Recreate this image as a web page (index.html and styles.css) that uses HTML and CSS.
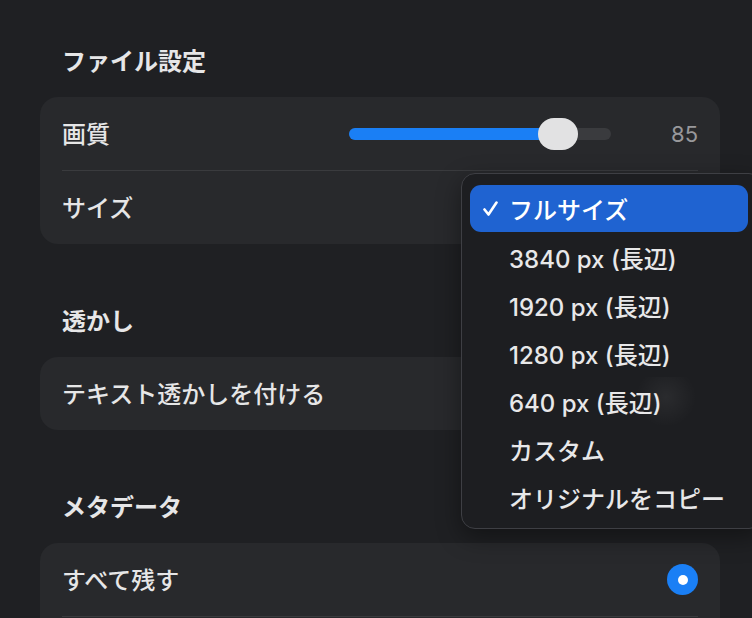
FILE: index.html
```html
<!DOCTYPE html>
<html lang="ja">
<head>
    <meta charset="UTF-8">
    <meta name="viewport" content="width=device-width, initial-scale=1.0">
    <title>書き出し設定</title>
    <link rel="stylesheet" href="styles.css">
</head>
<body>

<div class="page">

    <div class="section">
        <div class="section-title">ファイル設定</div>
        <div class="card">
            <div class="row">
                <span class="label">画質</span>
                <div class="slider">
                    <div class="slider-fill" style="width: 209px"></div>
                    <div class="slider-thumb" style="left: 189px"></div>
                </div>
                <span class="value">85</span>
            </div>
            <div class="row">
                <span class="label">サイズ</span>
            </div>
        </div>
    </div>

    <div class="section">
        <div class="section-title">透かし</div>
        <div class="card">
            <div class="row">
                <span class="label">テキスト透かしを付ける</span>
            </div>
        </div>
    </div>

    <div class="section">
        <div class="section-title">メタデータ</div>
        <div class="card">
            <div class="row">
                <span class="label">すべて残す</span>
                <span class="radio"></span>
            </div>
            <div class="row"></div>
        </div>
    </div>

</div>

<div class="menu">
    <div class="menu-item selected">
        <span class="check">
            <svg width="15" height="16" viewBox="0 0 15 16"><path d="M1.5 8.5 L5.5 13.5 L13.5 1.5" fill="none" stroke="#fff" stroke-width="2.6" stroke-linecap="round" stroke-linejoin="round"/></svg>
        </span>
        フルサイズ
    </div>
    <div class="menu-item"><span class="check"></span>3840 px (長辺)</div>
    <div class="menu-item"><span class="check"></span>1920 px (長辺)</div>
    <div class="menu-item"><span class="check"></span>1280 px (長辺)</div>
    <div class="menu-item hover"><span class="check"></span>640 px (長辺)</div>
    <div class="menu-item"><span class="check"></span>カスタム</div>
    <div class="menu-item"><span class="check"></span>オリジナルをコピー</div>
</div>

</body>
</html>
```

FILE: styles.css
```css
body {
    margin: 0;
    background-color: #1f2023;
    color: #e6e6e7;
    font-family: "Inter", "Noto Sans CJK JP", sans-serif;
    overflow: hidden;
    height: 618px;
}
.page {
    padding: 44px 32px 0 40px;
}
.section {
    margin-bottom: 60px;
}
.section-title {
    height: 36px;
    line-height: 36px;
    padding-left: 22px;
    margin-bottom: 17px;
    font-size: 24px;
    font-weight: 600;
}
.card {
    background-color: #28292c;
    border-radius: 18px;
    padding: 0 22px;
}
.row {
    display: flex;
    align-items: center;
    height: 73px;
    border-top: 1px solid #3a3b3e;
}
.row:first-child {
    border-top: none;
}
.label {
    flex: 1;
    font-size: 24px;
    font-weight: 500;
    margin-top: -3px;
}
.slider {
    position: relative;
    width: 262px;
    height: 12px;
    border-radius: 6px;
    background-color: #3a3b3e;
}
.slider-fill {
    height: 100%;
    border-radius: 6px;
    background-color: #1a7ff5;
}
.slider-thumb {
    position: absolute;
    top: -10px;
    width: 40px;
    height: 32px;
    border-radius: 16px;
    background-color: #e2e2e3;
}
.value {
    width: 87px;
    text-align: right;
    font-size: 22px;
    color: #98989b;
}
.radio {
    width: 31px;
    height: 31px;
    border-radius: 50%;
    background-color: #1a7ff5;
    display: flex;
    align-items: center;
    justify-content: center;
}
.radio::after {
    content: "";
    width: 10px;
    height: 10px;
    border-radius: 50%;
    background-color: #fff;
}
.menu {
    position: absolute;
    left: 461px;
    top: 173px;
    width: 300px;
    height: 343px;
    padding: 11px 0 0 0;
    background-color: #1d1e21;
    border: 1px solid #3e3f44;
    border-radius: 14px;
    box-shadow: 0 8px 24px rgba(0, 0, 0, 0.4);
}
.menu-item {
    display: flex;
    align-items: center;
    height: 48px;
    width: 278px;
    margin-left: 8px;
    padding-left: 13px;
    box-sizing: border-box;
    font-size: 24px;
    font-weight: 500;
    color: #e8e8e9;
}
.menu-item.selected {
    height: 47px;
    margin-bottom: 1px;
    border-radius: 11px;
    background-color: #1f63d1;
    color: #fff;
}
.menu-item.hover {
    background: radial-gradient(circle at 196px 20px, rgba(255, 255, 255, 0.06), rgba(255, 255, 255, 0) 30px);
}
.check {
    width: 26px;
    display: flex;
    align-items: center;
}
```
